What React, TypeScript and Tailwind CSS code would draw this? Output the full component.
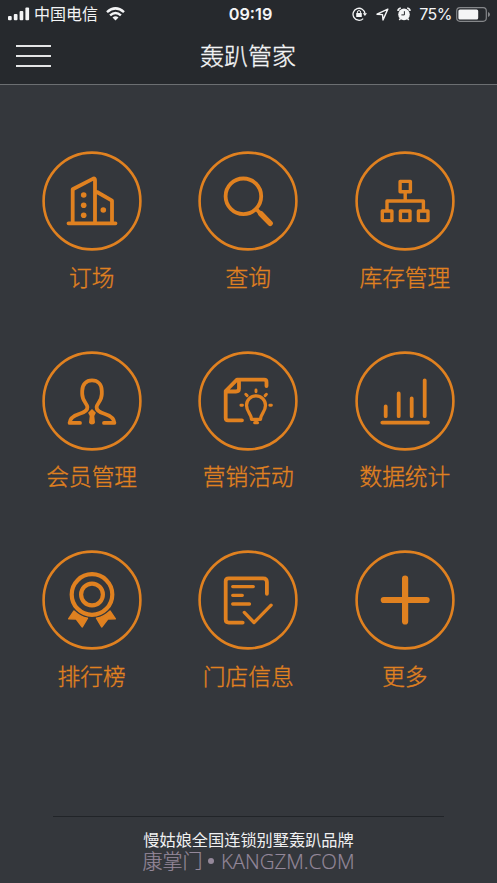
import type { ReactNode } from 'react';

interface MenuItem {
  label: string;
  icon: ReactNode;
}

const menuItems: MenuItem[] = [
  {
    label: '订场',
    icon: (
      <>
        <path d="M26.5 72.3H73.5M30.7 72V38.3L51.3 27.6Q53 27 53 29V72M55 41L70 49.7V72" />
        <g fill="currentColor" stroke="none">
          <circle cx="41.7" cy="44" r="2.8" />
          <circle cx="41.7" cy="54.2" r="2.8" />
          <circle cx="41.7" cy="64.3" r="2.8" />
          <circle cx="61.3" cy="59" r="2.8" />
        </g>
      </>
    ),
  },
  {
    label: '查询',
    icon: (
      <>
        <circle cx="45.4" cy="45.3" r="17.8" />
        <path d="M58.2 58L62.6 62.8" />
        <path d="M62.6 62.5L72.2 72.4" strokeWidth="5.4" />
      </>
    ),
  },
  {
    label: '库存管理',
    icon: (
      <g strokeWidth="3.4">
        <rect x="45.1" y="30.4" width="10.3" height="10.3" />
        <path d="M50.2 41V50M32 59V50H68.4V59" />
        <rect x="27.3" y="60" width="9.6" height="9.6" />
        <rect x="45.4" y="60" width="9.6" height="9.6" />
        <rect x="63.4" y="60" width="9.6" height="9.6" />
      </g>
    ),
  },
  {
    label: '会员管理',
    icon: (
      <>
        <path d="M38 71.9H27.6C28 67 32 64.6 37 63C42 61.6 45.6 59.4 45.4 56C45.2 52.6 40.2 50 40.2 43V40C40.2 33.5 44.2 29.4 50 29.4S59.8 33.5 59.8 40V43C59.8 50 54.8 52.6 54.6 56C54.4 59.4 58 61.6 63 63C68 64.6 72 67 72.4 71.9H62" />
        <path d="M50 58L53.9 61.7L52.3 65L53 71.5Q52.5 73.5 50 73.5T47 71.5L47.7 65L46.1 61.7Z" fill="currentColor" stroke="none" />
      </>
    ),
  },
  {
    label: '营销活动',
    icon: (
      <g transform="translate(.5 0)">
        <path d="M68 35V31Q68 28.7 65.7 28.7H38.5L27.2 40V67Q27.2 69.3 29.5 69.3H43.5M40.5 29V37.5Q40.5 40.5 37.5 40.5H28" />
        <g strokeWidth="3.3">
          <path d="M53 68.3C53 63 48 61 48 54.3A9.5 9.5 0 0 1 67 54.3C67 61 62 63 62 68.3Z" />
          <path d="M56.3 71.7H58.9" />
          <path d="M57.5 39V40.8M42.4 54.3H44M71.3 54.3H72.9M47.3 43.3L48.6 44.6M67.9 43.3L66.6 44.6" strokeWidth="2.9" />
        </g>
      </g>
    ),
  },
  {
    label: '数据统计',
    icon: <path d="M30.7 55.4V65.2M43.7 42.4V65.2M56.7 47.4V65.2M69.7 29.3V65.2M27.3 71.6H73" />,
  },
  {
    label: '排行榜',
    icon: (
      <>
        <circle cx="50" cy="44.5" r="20.3" strokeWidth="4.2" />
        <circle cx="50" cy="44.5" r="10.9" strokeWidth="4.2" />
        <path
          d="M32 61Q38 67 45.5 68.2L40.3 77L34.2 69L26.6 68.8ZM68 61Q62 67 54.5 68.2L59.7 77L65.8 69L73.4 68.8Z"
          fill="currentColor"
          strokeWidth="1.4"
        />
      </>
    ),
  },
  {
    label: '门店信息',
    icon: (
      <g transform="translate(.5 0)">
        <path d="M68.4 43.8V32Q68.4 28.3 64.7 28.3H30.2Q27.2 28.3 27.2 31.3V69.6Q27.2 72.6 30.2 72.6H44.2" />
        <path d="M34.2 36.6H54.8M34.2 45.3H43.8M34.2 54H51" strokeWidth="3.3" />
        <path d="M45.8 62.4L55.5 72.5L72.6 55.2" strokeWidth="3.3" />
      </g>
    ),
  },
  {
    label: '更多',
    icon: <path d="M50.1 28.6V71.4M28.8 50H71.6" strokeWidth="6.2" />,
  },
];

function StatusBar() {
  return (
    <div className="relative flex h-7 items-center justify-between pl-2 pr-[7px] text-[#f4f5f6]">
      <div className="flex items-center">
        <svg width="22" height="14" viewBox="0 0 22 14" fill="currentColor">
          <rect x="0" y="9" width="3.7" height="4.3" rx="1" />
          <rect x="5.8" y="7" width="3.7" height="6.3" rx="1" />
          <rect x="11.6" y="4" width="3.7" height="9.3" rx="1" />
          <rect x="17.4" y="0.5" width="3.7" height="12.8" rx="1" />
        </svg>
        <span className="ml-1 -mt-0.5 text-[16px] leading-7">中国电信</span>
        <svg className="ml-2" width="19" height="14" viewBox="0 0 19 14" fill="none" stroke="currentColor" strokeWidth="2.5">
          <path d="M1 5.1Q9.5 -2.4 18 5.1" />
          <path d="M4.1 8.4Q9.5 3.7 14.9 8.4" />
          <path d="M9.5 13.5L6.5 10.6Q9.5 7.9 12.5 10.6Z" fill="currentColor" stroke="none" />
        </svg>
      </div>
      <span className="absolute left-1/2 ml-[2px] -translate-x-1/2 font-[Inter] text-[16.3px] font-semibold leading-7">09:19</span>
      <div className="flex items-center">
        {/* orientation lock */}
        <svg width="15" height="14" viewBox="0 0 15 14" fill="none" stroke="currentColor" strokeWidth="1.3">
          <path d="M11.2 11.6A6 6 0 1 1 13 6.6" />
          <path d="M10.8 6.3H15L12.9 9Z" fill="currentColor" stroke="none" />
          <path d="M5.4 6.5V5.1Q5.4 3.6 7 3.6T8.6 5.1V6.5" strokeWidth="1" />
          <rect x="4.2" y="6" width="5.6" height="4.1" rx="0.5" fill="currentColor" stroke="none" />
        </svg>
        <svg className="ml-[9px]" width="13" height="13" viewBox="0 0 13 13" fill="none" stroke="currentColor" strokeWidth="1.4" strokeLinejoin="round">
          <path d="M11.8 1.1L1 6.2L6.5 6.6L7 12Z" />
        </svg>
        {/* alarm */}
        <svg className="ml-2" width="14" height="14" viewBox="0 0 14 14" fill="none" stroke="currentColor">
          <circle cx="7" cy="7.4" r="5.8" fill="currentColor" stroke="none" />
          <path d="M0.9 3.8Q1.2 1.4 3.8 1M13.1 3.8Q12.8 1.4 10.2 1" strokeWidth="1.7" />
          <path d="M3.5 11.5L2.3 13M10.5 11.5L11.7 13" strokeWidth="1.5" />
          <path d="M7.4 4.2V7.9H4.4" stroke="#26292d" strokeWidth="1" />
        </svg>
        <span className="ml-[8px] font-[Inter] text-[16px] leading-7 tracking-[-0.5px]">75%</span>
        <svg className="ml-[4px]" width="34" height="15" viewBox="0 0 34 15" fill="none">
          <rect x="0.7" y="0.7" width="29.6" height="13.6" rx="3.2" stroke="#85878a" strokeWidth="1.2" />
          <rect x="2.4" y="2.4" width="19.8" height="10.2" rx="1.6" fill="currentColor" />
          <path d="M32 5Q34 5.6 34 7.5T32 10Z" fill="#85878a" />
        </svg>
      </div>
    </div>
  );
}

function MenuButton({ item }: { item: MenuItem }) {
  return (
    <button className="flex flex-col items-center text-[#e08120]">
      <svg
        width="100"
        height="100"
        viewBox="0 0 100 100"
        fill="none"
        stroke="currentColor"
        strokeWidth="3.8"
        strokeLinecap="round"
        strokeLinejoin="round"
      >
        <circle cx="50" cy="50" r="48.4" strokeWidth="2.6" />
        {item.icon}
      </svg>
      <span className="mr-[0.5px] mt-[9.8px] text-[22.7px] font-light leading-8 [-webkit-text-stroke:0.35px_currentColor]">
        {item.label}
      </span>
    </button>
  );
}

export default function App() {
  return (
    <div className="flex h-[883px] w-[497px] flex-col overflow-hidden bg-[#34373c] font-['Noto_Sans_CJK_SC',sans-serif]">
      <header className="h-[85px] border-b border-[#6c6f72] bg-[#26292d]">
        <StatusBar />
        <div className="relative flex h-14 items-center justify-center">
          <button className="absolute left-4 flex w-[34.5px] flex-col gap-2" aria-label="menu">
            <span className="h-0.5 w-full bg-[#e4e5e6]" />
            <span className="h-0.5 w-full bg-[#e4e5e6]" />
            <span className="h-0.5 w-full bg-[#e4e5e6]" />
          </button>
          <h1 className="-mt-0.5 mr-px text-[24px] font-light leading-8 text-[#f4f5f6] [-webkit-text-stroke:0.35px_currentColor]">
            轰趴管家
          </h1>
        </div>
      </header>

      <main className="grid auto-rows-[199.6px] grid-cols-3 px-[13.6px] pt-[66px]">
        {menuItems.map((item) => (
          <MenuButton key={item.label} item={item} />
        ))}
      </main>

      <footer className="mx-[53px] mt-auto flex h-[67px] flex-col items-center border-t border-[#212428] pt-[11px]">
        <p className="text-[16.2px] leading-[22px] text-[#f0f0f1]">慢姑娘全国连锁别墅轰趴品牌</p>
        <p className="flex items-center whitespace-nowrap text-[20px] font-light leading-[22px] text-[#94889a] [-webkit-text-stroke:0.2px_currentColor]">
          <span>康掌门</span>
          <span className="ml-[6px] mr-[7px] size-[5.5px] rounded-full bg-[#94889a]" />
          <span className="font-['Open_Sans'] text-[20.4px]">KANGZM.COM</span>
        </p>
      </footer>
    </div>
  );
}
